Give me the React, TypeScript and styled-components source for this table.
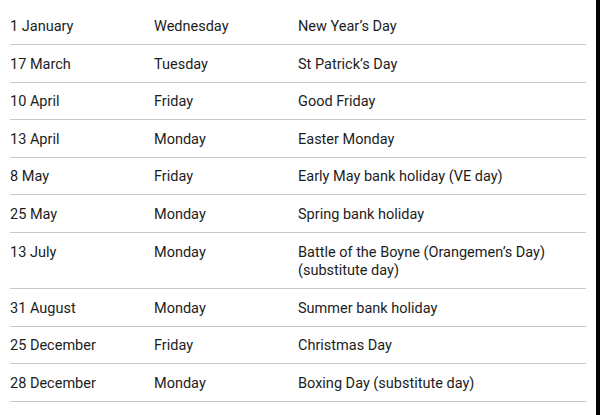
import React from "react";
import styled, { createGlobalStyle } from "styled-components";

const GlobalStyle = createGlobalStyle`
  html, body {
    margin: 0;
    padding: 0;
    background: #ffffff;
  }
  body {
    font-family: Roboto, "Noto Sans", "Liberation Sans", Arial, sans-serif;
    color: #1c1d1d;
  }
`;

const Page = styled.div`
  display: flex;
  width: 600px;
  height: 415px;
  overflow: hidden;
  background: #fff;
`;

const Content = styled.div`
  flex: 1;
  padding: 7.5px 10px 0 10px;
`;

// thin black strip down the right edge of the shot
const EdgeBar = styled.div`
  width: 4px;
  background: #050505;
`;

const Table = styled.div`
  display: flex;
  flex-direction: column;
  width: 576px;
`;

const Row = styled.div`
  display: grid;
  grid-template-columns: 144px 144px 1fr;
  padding: 10.5px 0 7.5px;
  border-bottom: 1px solid #c6c7c8;
`;

const Cell = styled.div`
  font-size: 14.5px;
  line-height: 18.6px;
  padding-right: 16px;
`;

type Holiday = { date: string; day: string; name: string };

const holidays: Holiday[] = [
  { date: "1 January", day: "Wednesday", name: "New Year’s Day" },
  { date: "17 March", day: "Tuesday", name: "St Patrick’s Day" },
  { date: "10 April", day: "Friday", name: "Good Friday" },
  { date: "13 April", day: "Monday", name: "Easter Monday" },
  { date: "8 May", day: "Friday", name: "Early May bank holiday (VE day)" },
  { date: "25 May", day: "Monday", name: "Spring bank holiday" },
  {
    date: "13 July",
    day: "Monday",
    name: "Battle of the Boyne (Orangemen’s Day) (substitute day)",
  },
  { date: "31 August", day: "Monday", name: "Summer bank holiday" },
  { date: "25 December", day: "Friday", name: "Christmas Day" },
  { date: "28 December", day: "Monday", name: "Boxing Day (substitute day)" },
];

export default function App() {
  return (
    <>
      <GlobalStyle />
      <Page>
        <Content>
          <Table>
            {holidays.map((h) => (
              <Row key={h.date}>
                <Cell>{h.date}</Cell>
                <Cell>{h.day}</Cell>
                <Cell>{h.name}</Cell>
              </Row>
            ))}
          </Table>
        </Content>
        <EdgeBar />
      </Page>
    </>
  );
}
